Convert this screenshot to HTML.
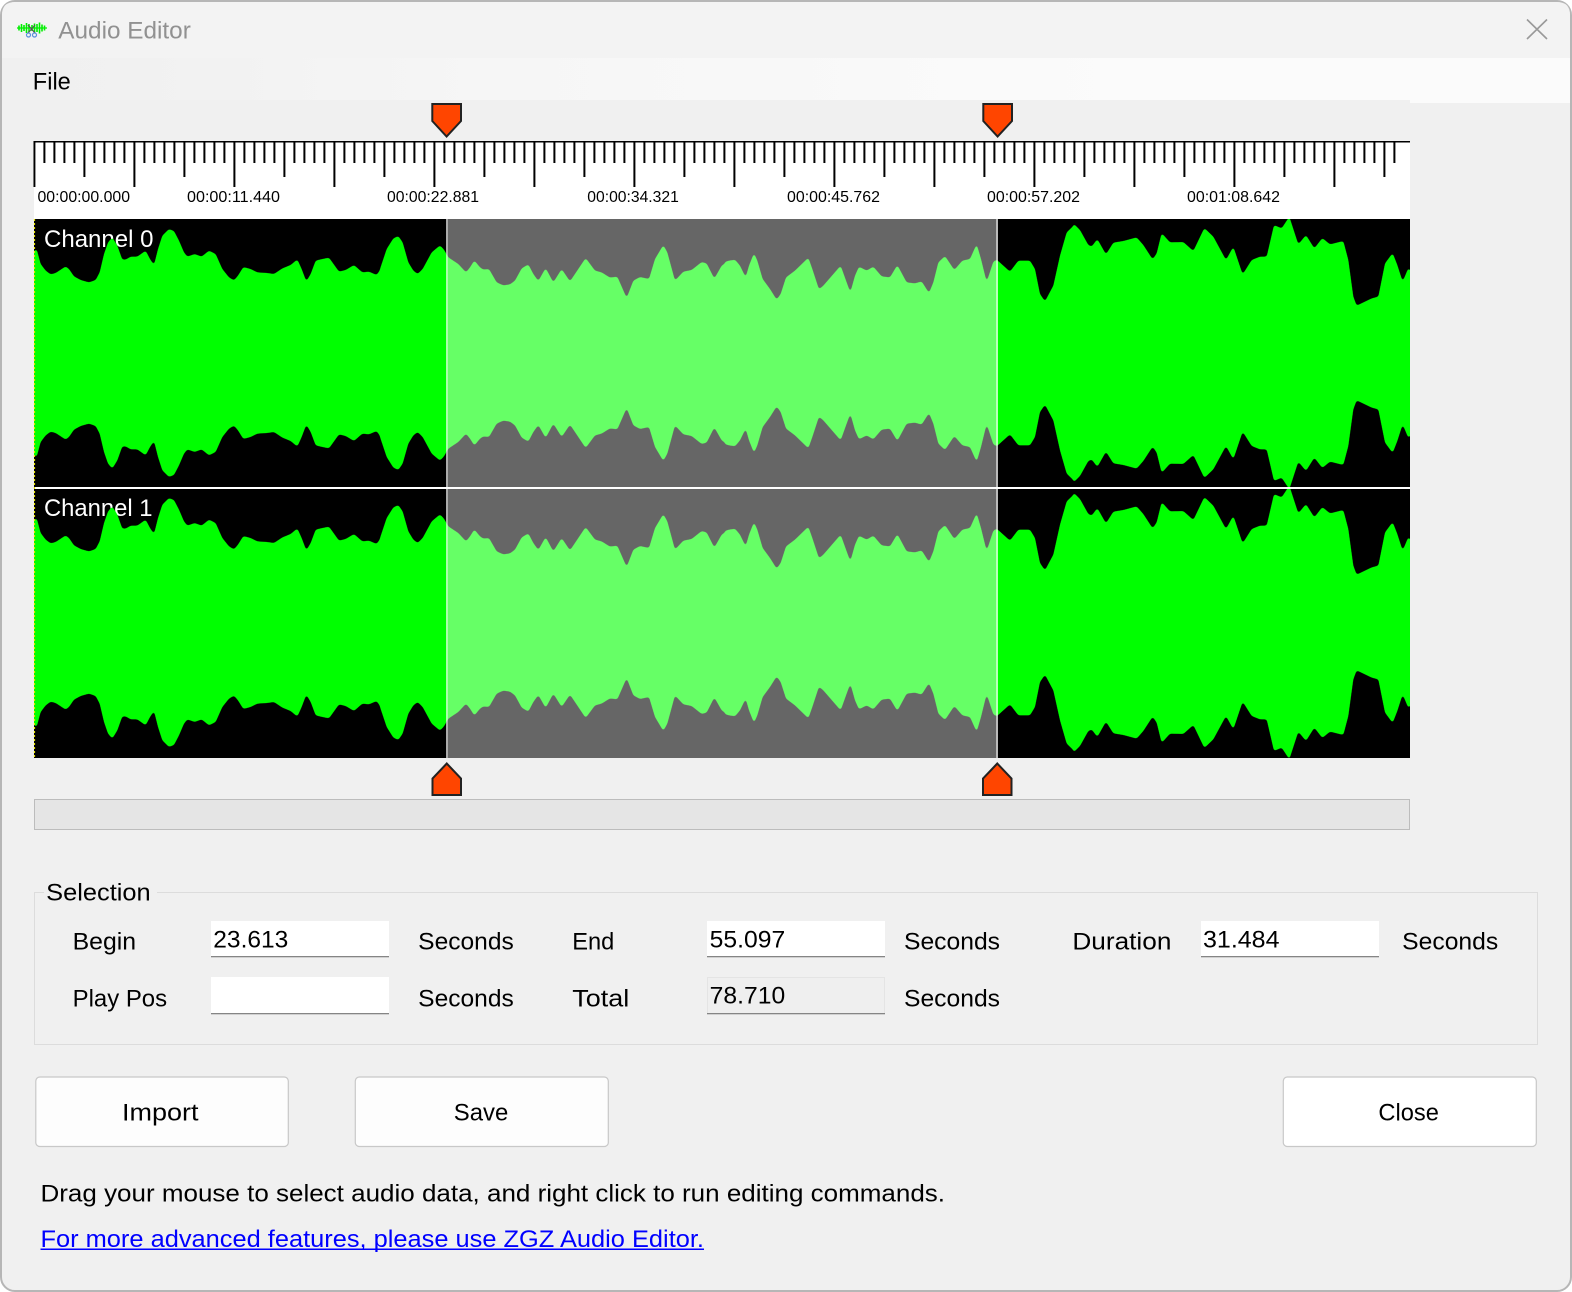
<!DOCTYPE html>
<html lang="en">
<head>
<meta charset="utf-8">
<title>Audio Editor</title>
<style>
html,body{margin:0;padding:0;background:#fff;width:1572px;height:1292px;overflow:hidden}
svg{display:block}
text{font-family:"Liberation Sans",Arial,sans-serif;font-size:24px;fill:#000}
.t{font-size:24.3px}
.r{font-size:16px}
</style>
</head>
<body>
<svg width="1572" height="1292" viewBox="0 0 1572 1292" xmlns="http://www.w3.org/2000/svg">
<defs>
<linearGradient id="menu" x1="0" x2="1" y1="0" y2="0">
<stop offset="0" stop-color="#f0f0f0"/><stop offset=".1" stop-color="#f1f1f1"/><stop offset=".35" stop-color="#f6f6f6"/><stop offset=".8" stop-color="#fbfbfb"/><stop offset="1" stop-color="#fbfbfb"/>
</linearGradient>
<pattern id="ticks" patternUnits="userSpaceOnUse" x="33.400" y="141" width="100" height="50">
<path fill="#000" d="M0 0h2v46H0zM10 0h2v22h-2zM20 0h2v22h-2zM30 0h2v22h-2zM40 0h2v22h-2zM50 0h2v36h-2zM60 0h2v22h-2zM70 0h2v22h-2zM80 0h2v22h-2zM90 0h2v22h-2z"/>
</pattern>
<clipPath id="c0"><rect x="34" y="219" width="1376" height="268"/></clipPath>
<clipPath id="c1"><rect x="34" y="489" width="1376" height="269"/></clipPath>
<filter id="smooth" filterUnits="userSpaceOnUse" x="0" y="190" width="1572" height="600" color-interpolation-filters="sRGB">
<feGaussianBlur stdDeviation="1.300"/>
<feComponentTransfer><feFuncA type="linear" slope="5" intercept="-2"/></feComponentTransfer>
</filter>
<g id="half" fill="#00ff00">
<polygon transform="translate(34,219) scale(.33333)" points="-6,100 8,90 20,135 35,155 50,166 65,162 95,142 105,150 120,172 140,183 165,190 185,183 197,160 210,105 222,70 235,55 250,80 265,122 275,122 290,113 310,113 335,95 348,120 360,138 372,90 385,50 405,30 420,36 435,65 450,100 460,113 482,105 503,113 525,95 545,105 565,150 585,175 600,184 612,170 628,144 650,150 670,160 700,162 720,165 745,148 770,138 790,121 803,150 817,187 830,165 845,125 860,121 885,116 915,158 935,153 960,138 985,160 1005,158 1028,168 1040,150 1050,125 1050,410 -6,410"/>
<polygon transform="translate(380,219) scale(.33333)" points="0,150 20,90 40,58 55,51 68,70 85,130 100,155 113,165 128,150 155,100 180,79 192,92 205,115 235,135 258,160 270,145 283,124 300,145 310,152 327,150 350,190 370,199 390,196 405,185 425,148 445,136 460,165 475,186 497,147 520,190 545,150 570,187 617,117 645,155 665,160 690,176 712,173 740,237 760,185 780,174 807,180 825,120 850,78 862,100 885,185 910,158 935,153 965,129 980,133 1003,179 1025,140 1050,123 1050,410 0,410"/>
<polygon transform="translate(725,219) scale(.33333)" points="0,128 30,122 45,140 62,175 72,140 87,102 97,125 113,180 135,210 155,242 167,225 183,175 210,155 250,116 262,150 282,211 295,200 347,140 365,190 376,220 390,170 402,143 425,155 445,143 470,172 495,175 517,138 545,190 570,193 590,187 612,222 625,190 640,130 660,111 688,153 712,125 735,120 755,75 768,120 785,189 805,128 815,122 855,158 880,125 915,125 930,150 945,225 960,247 985,200 1005,110 1025,40 1050,16 1050,410 0,410"/>
<polygon transform="translate(960,200) scale(.33333)" points="340,70 360,90 385,135 395,140 412,117 438,163 460,128 490,123 530,112 550,135 578,178 590,160 605,99 630,127 670,126 700,153 733,84 760,110 798,180 820,140 848,223 875,180 900,170 920,170 942,75 965,85 988,50 1015,133 1038,105 1063,145 1087,114 1110,133 1150,123 1165,180 1180,290 1190,317 1215,305 1235,295 1255,290 1275,190 1298,159 1312,195 1328,245 1345,204 1360,220 1360,467 340,467"/>
</g>
<polygon id="mt" points="432.3,104 461,104 461,121 446.6,136.5 432.3,121" fill="#ff4500" stroke="#222" stroke-width="2"/>
<polygon id="mb" points="446.800,763.500 461,778.500 461,795 432.500,795 432.500,778.500" fill="#ff4500" stroke="#222" stroke-width="2"/>
</defs>

<!-- window -->
<rect x="1" y="1" width="1570" height="1290" rx="14" ry="14" fill="#f0f0f0" stroke="#b6b6b6" stroke-width="2"/>
<path d="M2 58V15Q2 2 15 2H1557Q1570 2 1570 15V58Z" fill="#f3f3f3"/>
<rect x="2" y="58" width="1408" height="42" fill="url(#menu)"/>
<rect x="1410" y="58" width="160" height="45" fill="#fbfbfb"/>

<!-- title bar -->
<g stroke="#00ee00" stroke-width="1.600" fill="none">
<path d="M17 28H47" stroke-width="1.200"/>
<path d="M19 25.500v5M21.500 24v8M24 25v6M26.500 23v10M29 24v8M32 25v6M34.500 23.500v9M37 24v8M39.500 22.500v11M42 24.500v7M44.500 25.500v5"/>
</g>
<path d="M28 25L35 33M35 25L28 33" stroke="#555" stroke-width="1.200" fill="none"/>
<g fill="none" stroke="#5b8fdc" stroke-width="1.200"><circle cx="28.500" cy="35" r="2"/><circle cx="34.500" cy="35" r="2"/></g>
<text x="58.300" y="38.500" style="fill:#919191" textLength="132.500" lengthAdjust="spacingAndGlyphs">Audio Editor</text>
<path d="M1527 19.500L1547 39M1547 19.500L1527 39" stroke="#999" stroke-width="1.600" fill="none"/>
<text x="32.800" y="89.500" textLength="38" lengthAdjust="spacingAndGlyphs">File</text>

<!-- ruler -->
<rect x="34" y="141" width="1376" height="78" fill="#fff"/>
<rect x="34" y="141" width="1376" height="1.500" fill="#000"/>
<rect x="33.400" y="141" width="1362.600" height="48" fill="url(#ticks)"/>
<text class="r" x="37.500" y="202" textLength="92.500" lengthAdjust="spacingAndGlyphs">00:00:00.000</text>
<text class="r" x="187" y="202" textLength="93" lengthAdjust="spacingAndGlyphs">00:00:11.440</text>
<text class="r" x="387" y="202" textLength="92" lengthAdjust="spacingAndGlyphs">00:00:22.881</text>
<text class="r" x="587.300" y="202" textLength="91.500" lengthAdjust="spacingAndGlyphs">00:00:34.321</text>
<text class="r" x="787" y="202" textLength="93" lengthAdjust="spacingAndGlyphs">00:00:45.762</text>
<text class="r" x="987" y="202" textLength="93" lengthAdjust="spacingAndGlyphs">00:00:57.202</text>
<text class="r" x="1187" y="202" textLength="93" lengthAdjust="spacingAndGlyphs">00:01:08.642</text>

<!-- waveform -->
<rect x="34" y="219" width="1376" height="539" fill="#000"/>
<text x="44" y="247" style="fill:#fff" textLength="109.500" lengthAdjust="spacingAndGlyphs">Channel 0</text>
<text x="44" y="516" style="fill:#fff" textLength="108.500" lengthAdjust="spacingAndGlyphs">Channel 1</text>
<g clip-path="url(#c0)"><g filter="url(#smooth)">
<use href="#half"/>
<use href="#half" transform="translate(0,706) scale(1,-1)"/>
</g></g>
<g clip-path="url(#c1)"><g filter="url(#smooth)">
<use href="#half" transform="translate(0,269)"/>
<use href="#half" transform="translate(0,976) scale(1,-1)"/>
</g></g>
<rect x="446" y="219" width="552" height="539" fill="#fff" fill-opacity=".4"/>
<rect x="446" y="219" width="2" height="539" fill="#fff" fill-opacity=".45"/>
<rect x="996" y="219" width="2" height="539" fill="#fff" fill-opacity=".55"/>
<rect x="34" y="487" width="1376" height="2" fill="#fff"/>
<line x1="34.500" y1="219" x2="34.500" y2="758" stroke="#e6e600" stroke-width="1.200" stroke-dasharray="2 2"/>

<!-- markers -->
<use href="#mt"/><use href="#mt" transform="translate(551,0)"/>
<use href="#mb"/><use href="#mb" transform="translate(550.500,0)"/>

<!-- scroll bar -->
<rect x="34.500" y="799.500" width="1375" height="30" fill="#e5e5e5" stroke="#bcbcbc" stroke-width="1"/>

<!-- selection group -->
<rect x="34.500" y="892.500" width="1503" height="152" fill="none" stroke="#dcdcdc" stroke-width="1"/>
<rect x="44" y="885" width="113" height="14" fill="#f0f0f0"/>
<text x="46.200" y="900.500" class="t" textLength="104.500" lengthAdjust="spacingAndGlyphs">Selection</text>

<g fill="#fff">
<rect x="211" y="921" width="178" height="36"/>
<rect x="211" y="977" width="178" height="37"/>
<rect x="707" y="921" width="178" height="36"/>
<rect x="1201" y="921" width="178" height="36"/>
</g>
<rect x="707.500" y="977.500" width="177" height="36" fill="#efefef" stroke="#e4e4e4"/>
<g fill="#858585">
<rect x="211" y="956" width="178" height="1.300"/>
<rect x="211" y="1013" width="178" height="1.300"/>
<rect x="707" y="956" width="178" height="1.300"/>
<rect x="707" y="1013" width="178" height="1.300"/>
<rect x="1201" y="956" width="178" height="1.300"/>
</g>

<g>
<text class="t" x="72.600" y="949.500" textLength="63.500" lengthAdjust="spacingAndGlyphs">Begin</text>
<text class="t" x="213.300" y="947.500" textLength="75" lengthAdjust="spacingAndGlyphs">23.613</text>
<text class="t" x="418.200" y="949.500" textLength="95.600" lengthAdjust="spacingAndGlyphs">Seconds</text>
<text class="t" x="572.300" y="949.500" textLength="42" lengthAdjust="spacingAndGlyphs">End</text>
<text class="t" x="709.700" y="947.500" textLength="75.500" lengthAdjust="spacingAndGlyphs">55.097</text>
<text class="t" x="904" y="949.500" textLength="96" lengthAdjust="spacingAndGlyphs">Seconds</text>
<text class="t" x="1072.400" y="949.500" textLength="99" lengthAdjust="spacingAndGlyphs">Duration</text>
<text class="t" x="1203" y="947.500" textLength="76.500" lengthAdjust="spacingAndGlyphs">31.484</text>
<text class="t" x="1402.200" y="949.500" textLength="96" lengthAdjust="spacingAndGlyphs">Seconds</text>
<text class="t" x="72.600" y="1006.500" textLength="94.500" lengthAdjust="spacingAndGlyphs">Play Pos</text>
<text class="t" x="418.200" y="1006.500" textLength="95.600" lengthAdjust="spacingAndGlyphs">Seconds</text>
<text class="t" x="572.300" y="1006.500" textLength="57" lengthAdjust="spacingAndGlyphs">Total</text>
<text class="t" x="709.700" y="1003.500" textLength="75.500" lengthAdjust="spacingAndGlyphs">78.710</text>
<text class="t" x="904" y="1006.500" textLength="96" lengthAdjust="spacingAndGlyphs">Seconds</text>
</g>

<!-- buttons -->
<g fill="#fdfdfd" stroke="#c8c8c8" stroke-width="1.200">
<rect x="35.800" y="1077" width="252.500" height="69.500" rx="4"/>
<rect x="355.300" y="1077" width="253" height="69.500" rx="4"/>
<rect x="1283.300" y="1077" width="253" height="69.500" rx="4" fill="#fff"/>
</g>
<text class="t" x="122" y="1120.500" textLength="76.500" lengthAdjust="spacingAndGlyphs">Import</text>
<text class="t" x="453.800" y="1120.500" textLength="54.500" lengthAdjust="spacingAndGlyphs">Save</text>
<text class="t" x="1378.400" y="1120.500" textLength="60.500" lengthAdjust="spacingAndGlyphs">Close</text>

<!-- footer -->
<text class="t" x="40.500" y="1201.500" textLength="904.500" lengthAdjust="spacingAndGlyphs">Drag your mouse to select audio data, and right click to run editing commands.</text>
<text class="t" x="40.500" y="1247" style="fill:#0000ff" textLength="663.500" lengthAdjust="spacingAndGlyphs">For more advanced features, please use ZGZ Audio Editor.</text>
<rect x="40.500" y="1248.500" width="663.500" height="1.500" fill="#0000ff"/>
</svg>
</body>
</html>
